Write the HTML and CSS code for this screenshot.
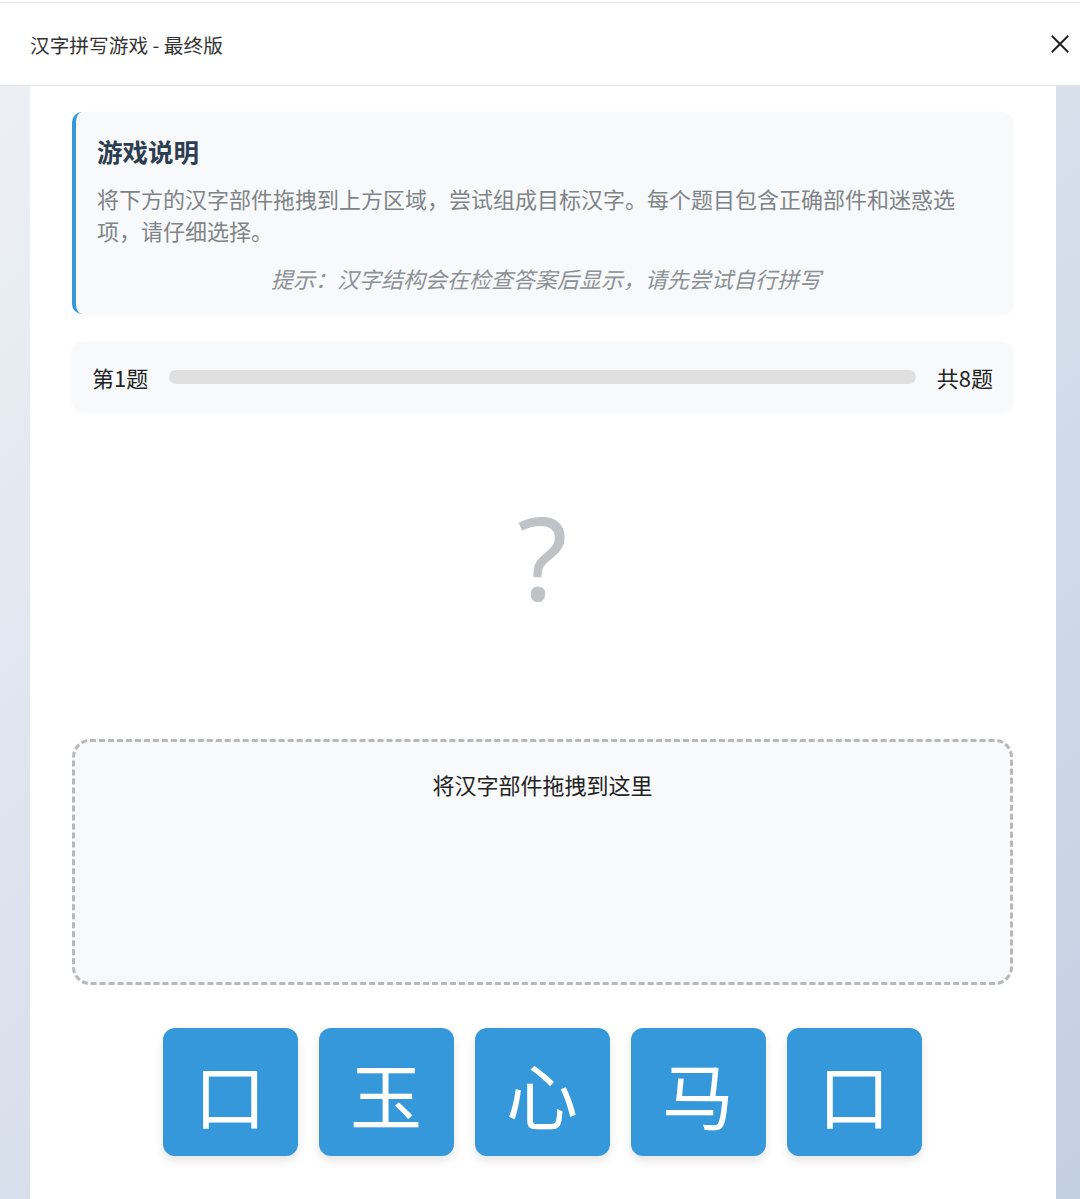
FILE: index.html
```html
<!DOCTYPE html>
<html lang="zh-CN">
<head>
<meta charset="utf-8">
<title>汉字拼写游戏 - 最终版</title>
<link rel="stylesheet" href="styles.css">
</head>
<body>
<div class="titlebar">
  <div class="titlebar-inner">
    <span class="title">汉字拼写游戏 - 最终版</span>
    <button class="close" aria-label="关闭">
      <svg width="18" height="18" viewBox="0 0 18 18"><path d="M1.5 1.5 L16.5 16.5 M16.5 1.5 L1.5 16.5" stroke="#222" stroke-width="2" stroke-linecap="square" fill="none"/></svg>
    </button>
  </div>
</div>
<div class="stage">
  <main class="container">
    <section class="instructions">
      <h2 class="inst-title">游戏说明</h2>
      <p class="inst-text">将下方的汉字部件拖拽到上方区域，尝试组成目标汉字。每个题目包含正确部件和迷惑选项，请仔细选择。</p>
      <p class="inst-hint">提示：汉字结构会在检查答案后显示，请先尝试自行拼写</p>
    </section>
    <section class="progress">
      <span class="progress-label">第1题</span>
      <div class="progress-track"><div class="progress-fill" style="width:0%"></div></div>
      <span class="progress-label">共8题</span>
    </section>
    <section class="target">
      <span class="target-char">?</span>
    </section>
    <section class="dropzone">
      <p class="drop-text">将汉字部件拖拽到这里</p>
    </section>
    <section class="pieces">
      <div class="piece">口</div>
      <div class="piece">玉</div>
      <div class="piece">心</div>
      <div class="piece">马</div>
      <div class="piece">口</div>
    </section>
  </main>
</div>
</body>
</html>
```
FILE: styles.css
```css
* { box-sizing: border-box; }
html, body {
  margin: 0;
  padding: 0;
  height: 100%;
}
body {
  font-family: "Noto Sans CJK SC", "Noto Sans", sans-serif;
  background: linear-gradient(135deg, #eef1f6 0%, #c3cfe2 100%);
  color: #222;
  overflow: hidden;
}
.titlebar {
  background: #fff;
  padding-top: 2px;
}
.titlebar-inner {
  height: 84px;
  border-top: 1px solid #e6e6e6;
  border-bottom: 1px solid #e3e3e3;
  display: flex;
  align-items: center;
  justify-content: space-between;
  padding: 0 11px 0 30px;
}
.title {
  font-size: 19.7px;
  color: #333;
}
.close {
  background: none;
  border: 0;
  padding: 0;
  width: 18px;
  height: 18px;
  display: flex;
}
.stage {
  padding: 0 24px 0 30px;
  height: calc(100% - 86px);
}
.container {
  background: #fff;
  height: 100%;
  padding: 26px 43px 40px 42px;
}
.instructions {
  background: #f8f9fa;
  border-left: 4px solid #3498db;
  border-radius: 10px;
  padding: 22px 48px 20px 21px;
  box-shadow: 0 1px 4px rgba(0, 0, 0, 0.03);
}
.inst-title {
  margin: 0;
  font-size: 25.5px;
  line-height: 34px;
  font-weight: 700;
  color: #2c3e50;
}
.inst-text {
  margin: 14px 0 0;
  font-size: 22px;
  line-height: 32px;
  color: #7f8489;
}
.inst-hint {
  margin: 16px 0 0;
  font-size: 22px;
  line-height: 32px;
  color: #8c9196;
  font-style: italic;
  text-align: center;
  padding-left: 30px;
}
.progress {
  margin-top: 28px;
  height: 70px;
  background: #f8f9fa;
  border-radius: 10px;
  display: flex;
  align-items: center;
  gap: 21px;
  padding: 0 20px;
  box-shadow: 0 1px 4px rgba(0, 0, 0, 0.03);
}
.progress-label {
  font-size: 22px;
  color: #222;
  white-space: nowrap;
}
.progress-track {
  flex: 1;
  height: 14px;
  border-radius: 7px;
  background: #e0e0e0;
  overflow: hidden;
}
.progress-fill {
  height: 100%;
  background: #3498db;
}
.target {
  height: 327px;
  display: flex;
  align-items: center;
  justify-content: center;
}
.target-char {
  font-family: "Noto Sans", "Open Sans", sans-serif;
  font-size: 116px;
  line-height: 1;
  color: #bdc3c7;
  margin-bottom: 42px;
}
.dropzone {
  height: 246px;
  border: 3px dashed #b8b8b8;
  border-radius: 18px;
  background: #f8f9fa;
  padding-top: 27px;
}
.drop-text {
  margin: 0;
  text-align: center;
  font-size: 22px;
  line-height: 30px;
  color: #222;
}
.pieces {
  margin-top: 43px;
  display: flex;
  justify-content: center;
  gap: 21px;
  padding-right: 1px;
}
.piece {
  width: 135px;
  height: 128px;
  background: #3498db;
  border-radius: 12px;
  color: #fff;
  font-size: 72px;
  display: flex;
  align-items: center;
  justify-content: center;
  box-shadow: 0 5px 10px rgba(0, 0, 0, 0.1);
}
```
